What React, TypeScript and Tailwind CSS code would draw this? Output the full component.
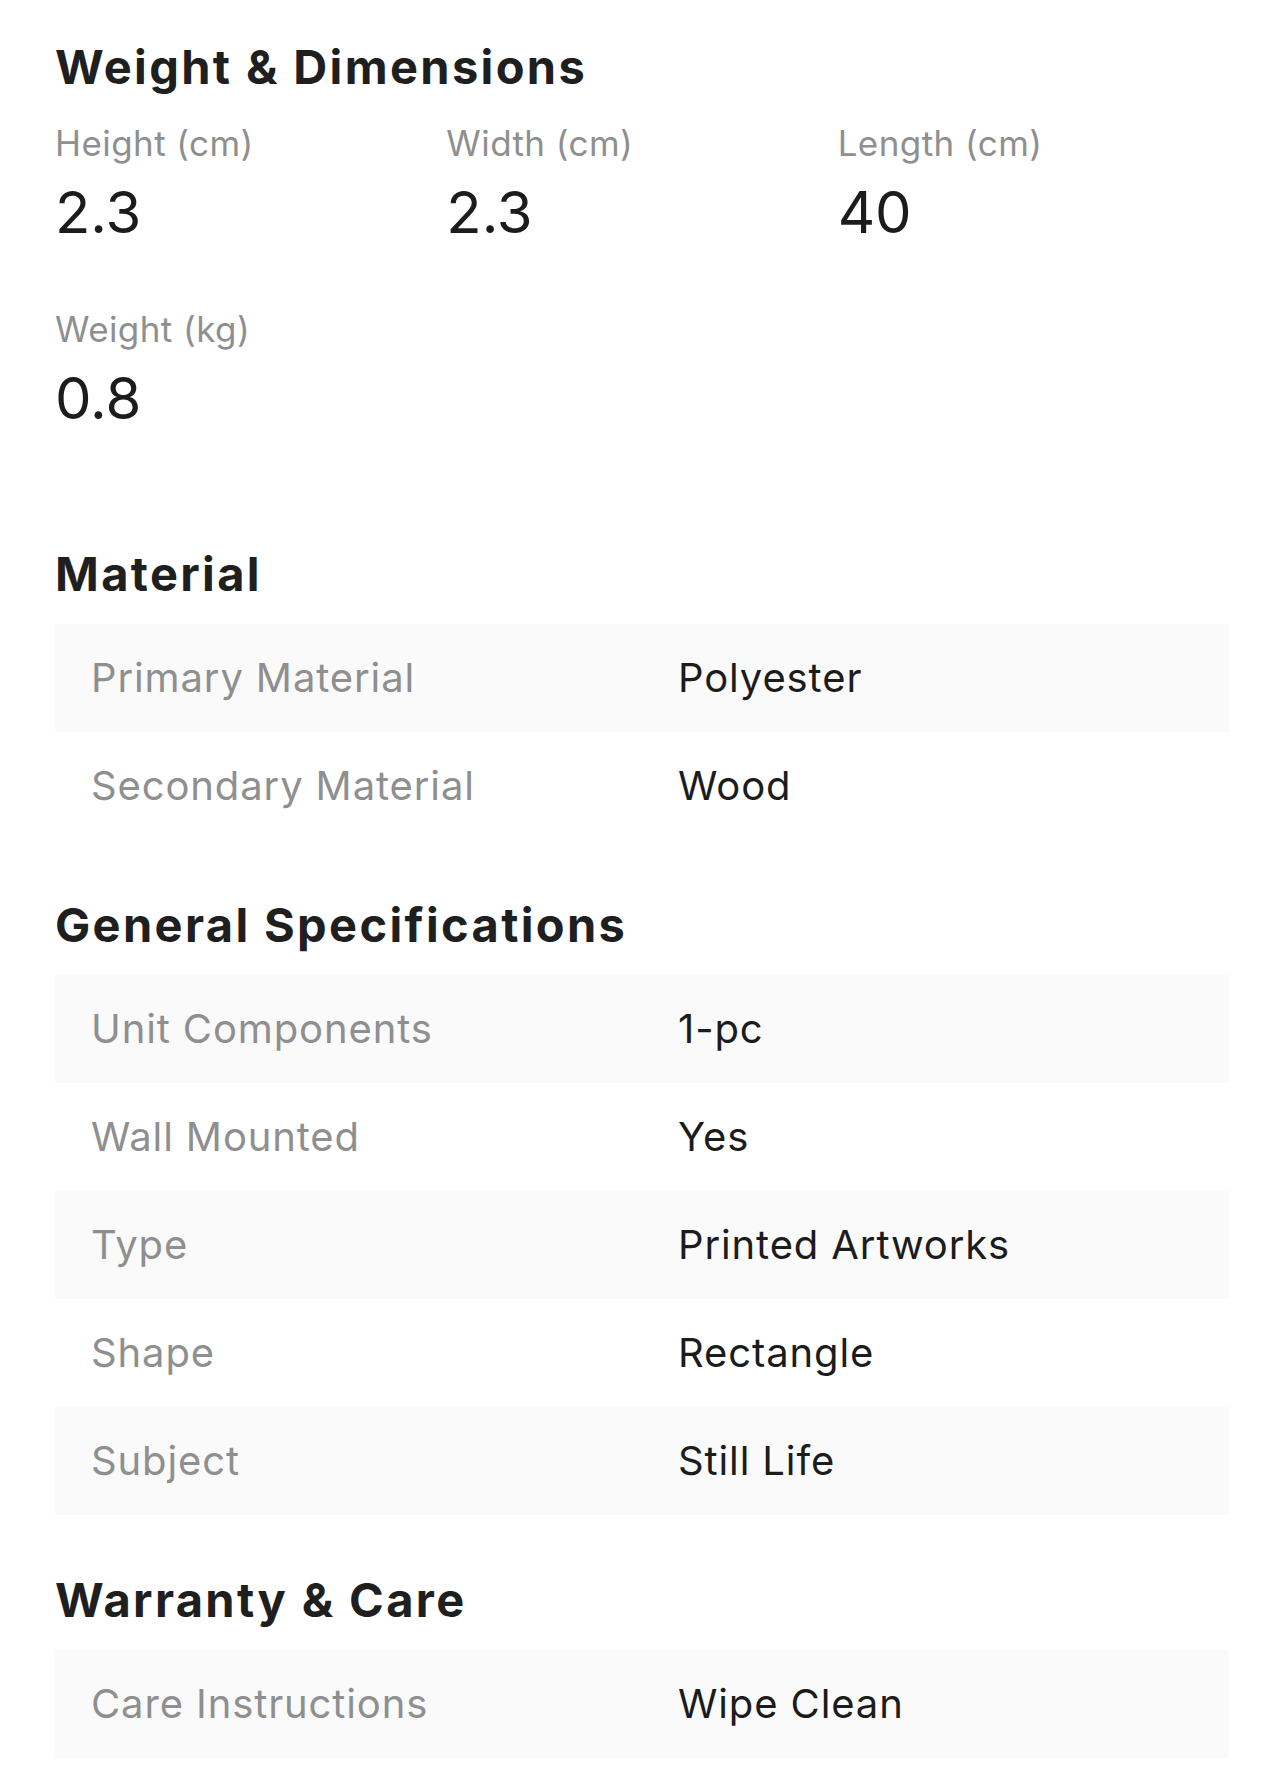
import React from 'react';

type Row = { label: string; value: string };

const dimensions: Row[] = [
  { label: 'Height (cm)', value: '2.3' },
  { label: 'Width (cm)', value: '2.3' },
  { label: 'Length (cm)', value: '40' },
  { label: 'Weight (kg)', value: '0.8' },
];

const sections: { title: string; rows: Row[] }[] = [
  {
    title: 'Material',
    rows: [
      { label: 'Primary Material', value: 'Polyester' },
      { label: 'Secondary Material', value: 'Wood' },
    ],
  },
  {
    title: 'General Specifications',
    rows: [
      { label: 'Unit Components', value: '1-pc' },
      { label: 'Wall Mounted', value: 'Yes' },
      { label: 'Type', value: 'Printed Artworks' },
      { label: 'Shape', value: 'Rectangle' },
      { label: 'Subject', value: 'Still Life' },
    ],
  },
  {
    title: 'Warranty & Care',
    rows: [{ label: 'Care Instructions', value: 'Wipe Clean' }],
  },
];

const SectionTitle: React.FC<{ children: React.ReactNode }> = ({ children }) => (
  <h2 className="text-[47px] leading-[56px] font-bold tracking-[0.05em] text-[#1f1f1f]">
    {children}
  </h2>
);

const SpecTable: React.FC<{ rows: Row[] }> = ({ rows }) => (
  <div className="mt-[22px]">
    {rows.map((row, i) => (
      <div
        key={row.label}
        className={`grid grid-cols-2 h-[108px] items-center text-[40px] leading-[48px] tracking-[0.022em] ${
          i % 2 === 0 ? 'bg-[#fafafa]' : 'bg-white'
        }`}
      >
        <div className="px-[36px] text-[#8f8f8f]">{row.label}</div>
        <div className="px-[36px] text-[#1c1c1c]">{row.value}</div>
      </div>
    ))}
  </div>
);

export default function App() {
  return (
    <div
      className="min-h-screen bg-white px-[55px] pt-[39px] pb-[28px]"
      style={{ fontFamily: 'Inter, "Noto Sans", sans-serif' }}
    >
      {/* Weight & Dimensions */}
      <section>
        <SectionTitle>Weight &amp; Dimensions</SectionTitle>
        <div className="mt-[26px] grid grid-cols-3 gap-y-[61px]">
          {dimensions.map((d) => (
            <div key={d.label}>
              <p className="text-[35px] leading-[44px] tracking-[0.012em] text-[#8f8f8f]">{d.label}</p>
              <p className="mt-[13px] text-[58px] leading-[68px] text-[#1c1c1c]">{d.value}</p>
            </div>
          ))}
        </div>
      </section>

      {sections.map((s, i) => (
        <section key={s.title} className={i === 0 ? 'mt-[114px]' : 'mt-[57px]'}>
          <SectionTitle>{s.title}</SectionTitle>
          <SpecTable rows={s.rows} />
        </section>
      ))}
    </div>
  );
}
